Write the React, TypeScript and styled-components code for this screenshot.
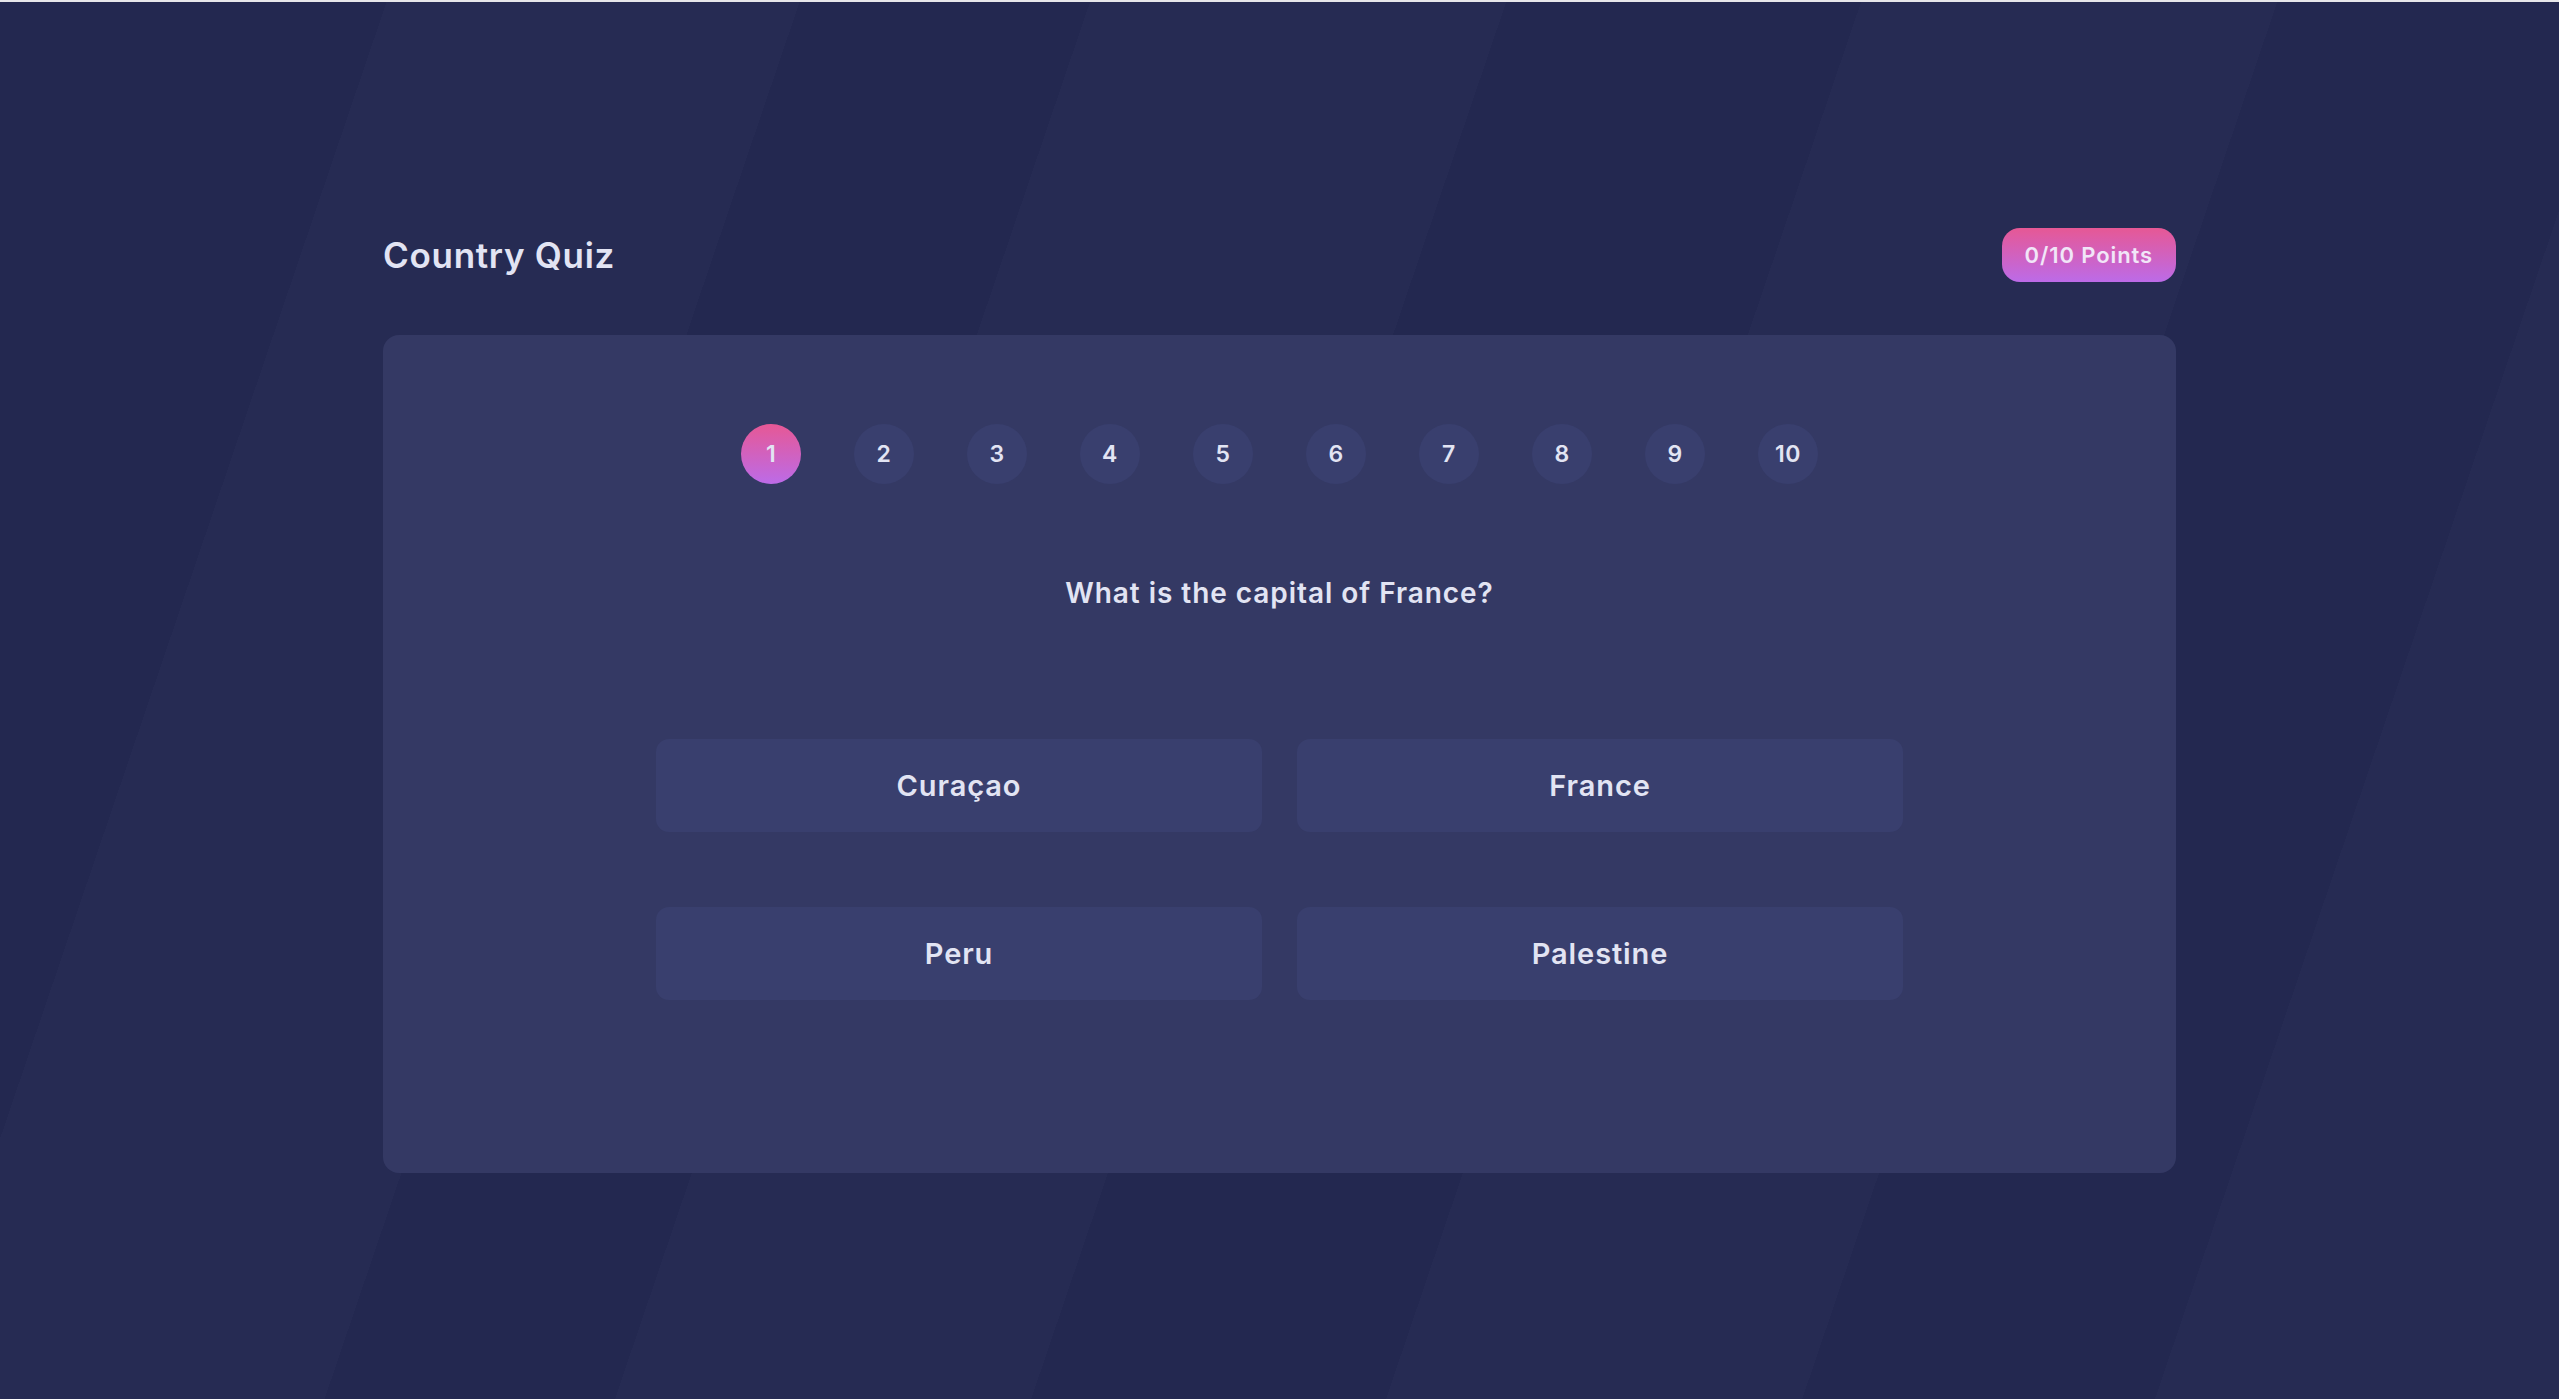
import React from "react";
import styled, { createGlobalStyle } from "styled-components";

const GlobalStyle = createGlobalStyle`
  html, body {
    margin: 0;
    padding: 0;
    background: #232850;
  }
  * { box-sizing: border-box; }
  body {
    font-family: Inter, "Noto Sans", "Liberation Sans", sans-serif;
    color: #E2E4F3;
  }
`;

const TopBar = styled.div`
  height: 2px;
  background: #e6e6ea;
`;

const Page = styled.div`
  height: calc(100vh - 2px);
  overflow: hidden;
  background: linear-gradient(
    108.78deg,
    #232850 0px, #232850 366px,
    #262b53 366px, #262b53 757px,
    #232850 757px, #232850 1032px,
    #262b53 1032px, #262b53 1426px,
    #232850 1426px, #232850 1762px,
    #262b53 1762px, #262b53 2156px,
    #232850 2156px, #232850 2490px,
    #262b53 2490px
  );
`;

const Container = styled.main`
  width: 1793px;
  margin: 0 auto;
  padding-top: 226px;
`;

const Header = styled.header`
  display: flex;
  align-items: center;
  justify-content: space-between;
  height: 54px;
  margin-bottom: 53px;
`;

const Title = styled.h1`
  margin: 0;
  font-size: 35px;
  font-weight: 600;
  letter-spacing: 0.7px;
  color: #E2E4F3;
`;

const PointsBadge = styled.div`
  height: 54px;
  padding: 0 23px;
  display: flex;
  align-items: center;
  border-radius: 18px;
  background: linear-gradient(180deg, #E65895 0%, #BC6BE8 100%);
  font-size: 22px;
  font-weight: 600;
  letter-spacing: 0.9px;
  color: #F1E6F8;
`;

const Card = styled.section`
  background: #343964;
  border-radius: 16px;
  height: 838px;
  padding-top: 89px;
  display: flex;
  flex-direction: column;
  align-items: center;
`;

const Steps = styled.ol`
  list-style: none;
  margin: 0;
  padding: 0;
  display: flex;
  gap: 53px;
`;

const Step = styled.li<{ $active?: boolean }>`
  width: 60px;
  height: 60px;
  border-radius: 50%;
  display: flex;
  align-items: center;
  justify-content: center;
  font-size: 23px;
  font-weight: 600;
  letter-spacing: 0.5px;
  color: #E2E4F3;
  background: ${(p) =>
    p.$active ? "linear-gradient(180deg, #E65895 0%, #BC6BE8 100%)" : "#393F6E"};
`;

const Question = styled.h2`
  margin: 91px 0 0;
  font-size: 28px;
  line-height: 36px;
  font-weight: 600;
  letter-spacing: 0.95px;
  text-align: center;
  color: #E2E4F3;
`;

const Answers = styled.div`
  margin-top: 128px;
  display: grid;
  grid-template-columns: 606px 606px;
  column-gap: 35px;
  row-gap: 75px;
`;

const AnswerButton = styled.button`
  height: 93px;
  border: none;
  border-radius: 13px;
  background: #393F6E;
  color: #E2E4F3;
  font-family: inherit;
  font-size: 29px;
  font-weight: 600;
  letter-spacing: 0.9px;
  cursor: pointer;
`;

const steps = [1, 2, 3, 4, 5, 6, 7, 8, 9, 10];
const answers = ["Curaçao", "France", "Peru", "Palestine"];

export default function App() {
  return (
    <>
      <GlobalStyle />
      <TopBar />
      <Page>
        <Container>
          <Header>
            <Title>Country Quiz</Title>
            <PointsBadge>0/10 Points</PointsBadge>
          </Header>
          <Card>
            <Steps>
              {steps.map((n) => (
                <Step key={n} $active={n === 1}>
                  {n}
                </Step>
              ))}
            </Steps>
            <Question>What is the capital of France?</Question>
            <Answers>
              {answers.map((a) => (
                <AnswerButton key={a}>{a}</AnswerButton>
              ))}
            </Answers>
          </Card>
        </Container>
      </Page>
    </>
  );
}
